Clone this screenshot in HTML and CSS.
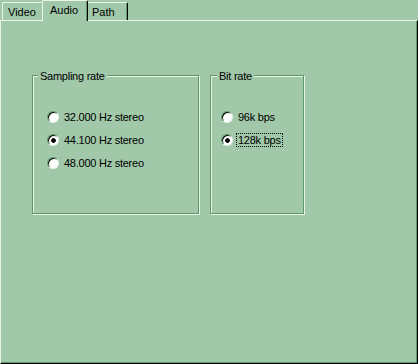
FILE: index.html
```html
<!DOCTYPE html>
<html lang="en">
<head>
    <meta charset="UTF-8">
    <title>Audio settings</title>
    <link rel="stylesheet" href="styles.css">
</head>
<body>
    <div class="window">
        <div class="tabs">
            <div class="tab">Video</div>
            <div class="tab active">Audio</div>
            <div class="tab">Path</div>
        </div>
        <div class="panel">
            <div class="groups">
                <fieldset class="group sampling">
                    <legend>Sampling rate</legend>
                    <label class="option"><input type="radio" name="rate"><span>32.000 Hz stereo</span></label>
                    <label class="option"><input type="radio" name="rate" checked><span>44.100 Hz stereo</span></label>
                    <label class="option"><input type="radio" name="rate"><span>48.000 Hz stereo</span></label>
                </fieldset>
                <fieldset class="group bitrate">
                    <legend>Bit rate</legend>
                    <label class="option"><input type="radio" name="bits"><span>96k bps</span></label>
                    <label class="option"><input type="radio" name="bits" checked><span class="focus">128k bps</span></label>
                </fieldset>
            </div>
        </div>
    </div>
</body>
</html>
```

FILE: styles.css
```css
body {
    margin: 0;
    font-family: 'Liberation Sans', Arial, sans-serif;
    font-size: 11px;
    color: #000;
    background: #a1c9a9;
}

/* Window */
.window {
    width: 418px;
    height: 364px;
    display: flex;
    flex-direction: column;
    background: #a1c9a9;
}

/* Tab strip */
.tabs {
    display: flex;
    align-items: flex-end;
    height: 20px;
    padding-left: 2px;
}

.tab {
    box-sizing: border-box;
    width: 42px;
    height: 18px;
    padding: 3px 0 0 5px;
    line-height: 13px;
    background: #a1c9a9;
    border-top: 1px solid #eaf5ec;
    border-left: 1px solid #eaf5ec;
    border-right: 1px solid #000;
    border-radius: 2px 2px 0 0;
    box-shadow: inset -1px 0 0 #5c9866;
}

.tab.active {
    position: relative;
    z-index: 1;
    width: 46px;
    height: 21px;
    margin: 0 -2px -1px -2px;
    padding-left: 7px;
}

/* Page */
.panel {
    flex: 1;
    box-sizing: border-box;
    border-top: 1px solid #eaf5ec;
    border-left: 1px solid #eaf5ec;
    border-right: 1px solid #000;
    border-bottom: 1px solid #000;
    box-shadow: inset -1px -1px 0 #5c9866;
}

.groups {
    display: flex;
    gap: 11px;
    margin-top: 47px;
    padding-left: 31px;
    letter-spacing: -0.25px;
}

/* Group boxes */
.group {
    box-sizing: border-box;
    height: 146px;
    margin: 0;
    padding: 27px 0 0 14px;
    min-width: 0;
    border: 1px solid #5c9866;
    box-shadow: 1px 1px 0 #eaf5ec, inset 1px 1px 0 #eaf5ec;
    display: flex;
    flex-direction: column;
    gap: 9px;
}

.group legend {
    padding: 2px 2px 0 2px;
    margin-left: -9px;
    line-height: 13px;
    background: #a1c9a9;
}

.sampling {
    width: 167px;
}

.bitrate {
    width: 94px;
    padding-left: 10px;
}

.bitrate legend {
    margin-left: -4px;
}

/* Radio buttons */
.option {
    display: flex;
    align-items: center;
    height: 14px;
}

.option input {
    appearance: none;
    -webkit-appearance: none;
    box-sizing: border-box;
    width: 12px;
    height: 12px;
    margin: 0 3px 0 0;
    border: 1px solid;
    border-color: #5c9866 #eaf5ec #eaf5ec #5c9866;
    border-radius: 50%;
    background: #fff;
    box-shadow: inset 1px 1px 0 #000;
}

.option input:checked {
    background: radial-gradient(circle at 5.5px 5.5px, #000 2px, #fff 2.6px);
}

.option span {
    padding: 0 1px;
    line-height: 12px;
    border: 1px solid transparent;
}

.option span.focus {
    border: 1px dotted #000;
}
```
